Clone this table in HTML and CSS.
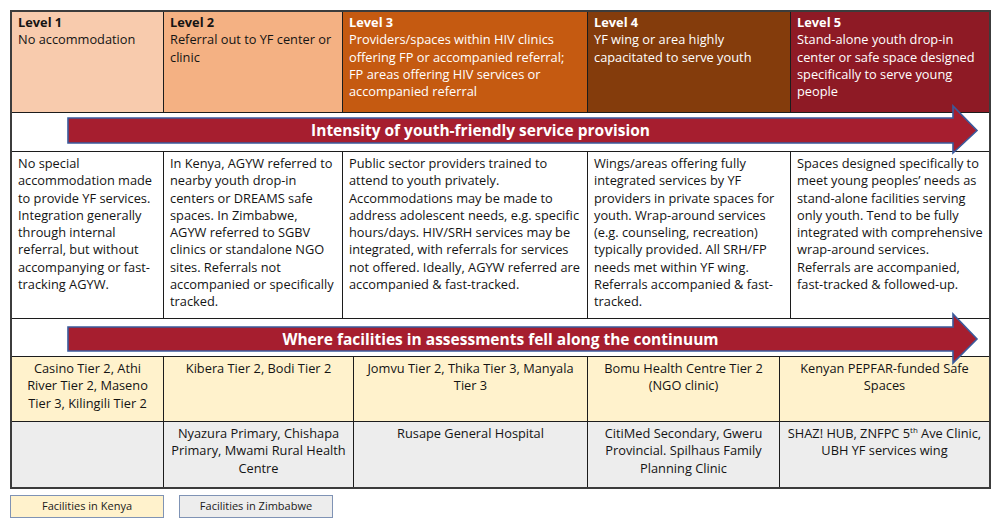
FILE: index.html
```html
<!DOCTYPE html>
<html lang="en">
<head>
<meta charset="utf-8">
<title>Continuum of youth-friendly service provision</title>
<link rel="stylesheet" href="styles.css">
</head>
<body>
<div class="chart">
  <div class="row levels">
    <div class="cell lvl1"><b>Level 1</b><br>No accommodation</div>
    <div class="cell lvl2"><b>Level 2</b><br>Referral out to YF center or clinic</div>
    <div class="cell lvl3"><b>Level 3</b><br>Providers/spaces within HIV clinics offering FP or accompanied referral; FP areas offering HIV services or accompanied referral</div>
    <div class="cell lvl4"><b>Level 4</b><br>YF wing or area highly capacitated to serve youth</div>
    <div class="cell lvl5"><b>Level 5</b><br>Stand-alone youth drop-in center or safe space designed specifically to serve young people</div>
  </div>
  <div class="band band-1">
    <svg class="arrow" width="977" height="56" viewBox="0 0 977 56">
      <polygon points="56,13 941,13 941,1 965,25.5 941,48 941,38 56,38" />
    </svg>
    <span class="band-label">Intensity of youth-friendly service provision</span>
  </div>
  <div class="row desc">
    <div class="cell">No special accommodation made to provide YF services. Integration generally through internal referral, but without accompanying or fast-tracking AGYW.</div>
    <div class="cell">In Kenya, AGYW referred to nearby youth drop-in centers or DREAMS safe spaces. In Zimbabwe, AGYW referred to SGBV clinics or standalone NGO sites. Referrals not accompanied or specifically tracked.</div>
    <div class="cell">Public sector providers trained to attend to youth privately. Accommodations may be made to address adolescent needs, e.g. specific hours/days. HIV/SRH services may be integrated, with referrals for services not offered. Ideally, AGYW referred are accompanied &amp; fast-tracked.</div>
    <div class="cell">Wings/areas offering fully integrated services by YF providers in private spaces for youth. Wrap-around services (e.g. counseling, recreation) typically provided. All SRH/FP needs met within YF wing. Referrals accompanied &amp; fast-tracked.</div>
    <div class="cell">Spaces designed specifically to meet young peoples’ needs as stand-alone facilities serving only youth. Tend to be fully integrated with comprehensive wrap-around services. Referrals are accompanied, fast-tracked &amp; followed-up.</div>
  </div>
  <div class="band band-2">
    <svg class="arrow" width="977" height="56" viewBox="0 0 977 56">
      <polygon points="56,13 941,13 941,0 965,25 941,49 941,37 56,37" />
    </svg>
    <span class="band-label">Where facilities in assessments fell along the continuum</span>
  </div>
  <div class="row sites kenya">
    <div class="cell">Casino Tier 2, Athi River Tier 2, Maseno Tier 3, Kilingili Tier 2</div>
    <div class="cell">Kibera Tier 2, Bodi Tier 2</div>
    <div class="cell">Jomvu Tier 2, Thika Tier 3, Manyala Tier 3</div>
    <div class="cell">Bomu Health Centre Tier 2 (NGO clinic)</div>
    <div class="cell">Kenyan PEPFAR-funded Safe Spaces</div>
  </div>
  <div class="row sites zim">
    <div class="cell"></div>
    <div class="cell">Nyazura Primary, Chishapa Primary, Mwami Rural Health Centre</div>
    <div class="cell">Rusape General Hospital</div>
    <div class="cell">CitiMed Secondary, Gweru Provincial. Spilhaus Family Planning Clinic</div>
    <div class="cell">SHAZ! HUB, ZNFPC 5<sup>th</sup> Ave Clinic, UBH YF services wing</div>
  </div>
</div>
<div class="legend">
  <div class="key key-kenya">Facilities in Kenya</div>
  <div class="key key-zim">Facilities in Zimbabwe</div>
</div>
</body>
</html>
```

FILE: styles.css
```css
html, body {
  margin: 0;
  padding: 0;
  background: #ffffff;
}

body {
  font-family: "Open Sans", "Noto Sans", sans-serif;
  font-size: 12.8px;
  line-height: 17.3px;
  color: #141414;
}

.chart {
  margin: 10px 0 0 10px;
  width: 981px;
  box-sizing: border-box;
  border: 2px solid #3c3c3c;
}

.row {
  display: grid;
  grid-template-columns: 152px 179px 245px 203px 1fr;
  border-bottom: 1px solid #1c1c1c;
  box-sizing: border-box;
}

.cell {
  border-right: 1px solid #1c1c1c;
  padding: 2px 6px 0 6px;
  box-sizing: border-box;
}

.cell:last-child {
  border-right: none;
}

.levels {
  height: 101px;
}

.levels .cell b {
  font-weight: 700;
}

.lvl1 { background: #f8cbad; }
.lvl2 { background: #f4b183; }
.lvl3 { background: #c55a11; color: #ffffff; }
.lvl4 { background: #843c0c; color: #ffffff; }
.lvl5 { background: #8e1a25; color: #ffffff; }

.desc {
  height: 167px;
}

.desc .cell {
  padding-top: 3px;
}

.band {
  position: relative;
  border-bottom: 1px solid #1c1c1c;
  display: flex;
  align-items: center;
  justify-content: center;
  box-sizing: border-box;
}

.band-1 {
  height: 39px;
}

.band-2 {
  height: 38px;
}

.arrow {
  position: absolute;
  left: 0;
  top: -8px;
  overflow: visible;
}

.band-2 .arrow {
  top: -5px;
}

.arrow polygon {
  fill: #a61e2f;
  stroke: #3a5a9c;
  stroke-width: 1.6;
  stroke-linejoin: miter;
}

.band-label {
  position: relative;
  color: #ffffff;
  font-weight: 700;
  font-size: 15.5px;
  line-height: 20px;
}

.band-1 .band-label {
  margin-right: 40px;
  top: -2px;
}

.band-2 .band-label {
  top: 1px;
}

.sites {
  grid-template-columns: 152px 190px 234px 192px 1fr;
  height: 65px;
  text-align: center;
}

.sites .cell {
  padding: 3px 5px 0 5px;
}

.sites .cell:first-child {
  padding: 3px 9px 0 9px;
}

.kenya { background: #fff2cc; }
.zim {
  background: #ededed;
  border-bottom: none;
}

.sites sup {
  font-size: 8px;
  line-height: 8px;
  vertical-align: baseline;
  position: relative;
  top: -5px;
}

.legend {
  display: flex;
  gap: 15px;
  margin: 6px 0 0 10px;
}

.key {
  width: 154px;
  height: 23px;
  box-sizing: border-box;
  border: 1.5px solid #7f93b5;
  font-size: 11px;
  line-height: 20px;
  text-align: center;
  color: #1a1a1a;
}

.key-kenya { background: #fff2cc; }
.key-zim { background: #ededed; }
```
